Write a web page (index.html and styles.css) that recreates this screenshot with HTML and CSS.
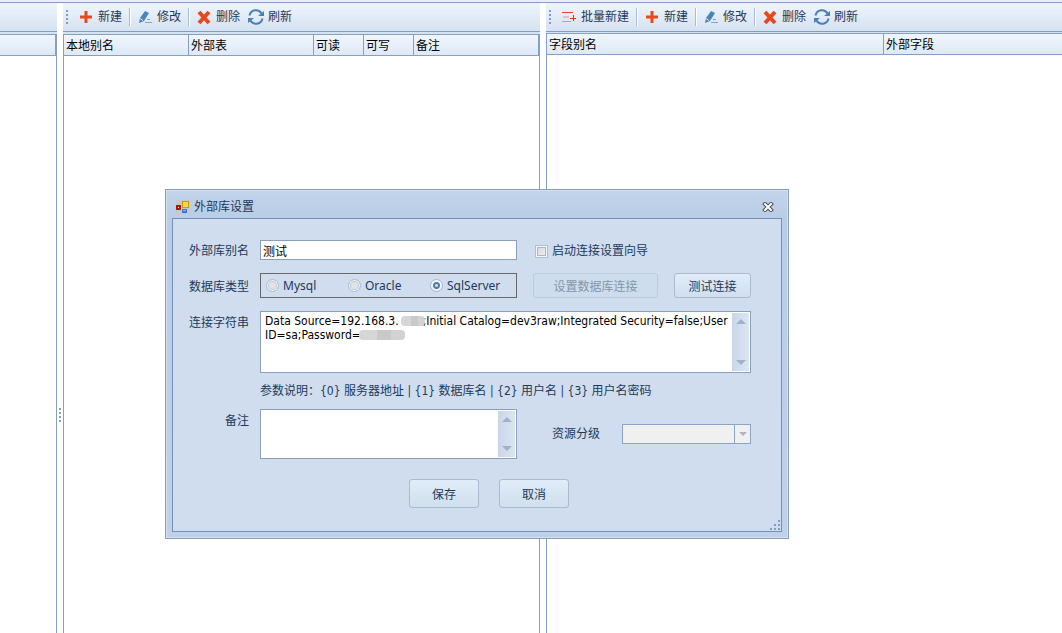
FILE: index.html
```html
<!DOCTYPE html>
<html lang="zh">
<head>
    <meta charset="UTF-8">
    <meta name="viewport" content="width=device-width, initial-scale=1.0">
    <title>外部库设置</title>
    <link rel="stylesheet" href="styles.css">
</head>
<body>
    <!-- 公用图标 -->
    <svg class="sprite" aria-hidden="true">
        <symbol id="i-add" viewBox="0 0 16 16">
            <path d="M8 2v12M2 8h12" stroke="#e8481c" stroke-width="3"/>
        </symbol>
        <symbol id="i-edit" viewBox="0 0 16 16">
            <path d="M8 2l4 2-5 8-5 2 1-5z" fill="#4a86bd"/>
            <path d="M3 9.500l3 2" stroke="#dfeaf6"/>
            <path d="M10 10.500h3M8 13.500h7" stroke="#7fa6cf"/>
        </symbol>
        <symbol id="i-del" viewBox="0 0 16 16">
            <path d="M3 3l10 11M13 3L3 14" stroke="#e8481c" stroke-width="4"/>
        </symbol>
        <symbol id="i-refresh" viewBox="0 0 16 16">
            <path d="M1.500 6.500a6.500 6.500 0 0 1 12-2M14.500 9.500a6.500 6.500 0 0 1-12 2" fill="none" stroke="#4a80b5" stroke-width="2"/>
            <path d="M16 2v5h-6zM0 14v-5h6z" fill="#4a80b5"/>
        </symbol>
        <symbol id="i-batch" viewBox="0 0 16 16">
            <path d="M1 3.500h11" stroke="#e0463a"/>
            <path d="M2 8h6M1 12.500h9" stroke="#ec8f87"/>
            <path d="M12.500 6v6M9 9.500h6" stroke="#e0301c"/>
        </symbol>
        <symbol id="i-up" viewBox="0 0 10 5">
            <path d="M0 5l5-5 5 5z" fill="#a0b2c9"/>
        </symbol>
        <symbol id="i-down" viewBox="0 0 10 5">
            <path d="M0 0l5 5 5-5z" fill="#a0b2c9"/>
        </symbol>
    </svg>

    <main class="workspace">
        <section class="pane pane-left">
            <div class="toolbar"></div>
            <div class="list">
                <table><thead><tr><th></th></tr></thead></table>
            </div>
        </section>

        <div class="splitter"><span class="dots"></span></div>

        <section class="pane">
            <div class="toolbar">
                <span class="dots"></span>
                <button type="button"><svg><use href="#i-add"/></svg>新建</button>
                <i class="sep"></i>
                <button type="button"><svg><use href="#i-edit"/></svg>修改</button>
                <i class="sep"></i>
                <button type="button"><svg><use href="#i-del"/></svg>删除</button>
                <button type="button"><svg><use href="#i-refresh"/></svg>刷新</button>
            </div>
            <div class="list">
                <table>
                    <thead>
                        <tr>
                            <th class="w-name">本地别名</th>
                            <th class="w-name">外部表</th>
                            <th class="w-flag">可读</th>
                            <th class="w-flag">可写</th>
                            <th>备注</th>
                        </tr>
                    </thead>
                </table>
            </div>
        </section>

        <div class="splitter"></div>

        <section class="pane pane-right">
            <div class="toolbar">
                <span class="dots"></span>
                <button type="button"><svg><use href="#i-batch"/></svg>批量新建</button>
                <i class="sep"></i>
                <button type="button"><svg><use href="#i-add"/></svg>新建</button>
                <i class="sep"></i>
                <button type="button"><svg><use href="#i-edit"/></svg>修改</button>
                <i class="sep"></i>
                <button type="button"><svg><use href="#i-del"/></svg>删除</button>
                <button type="button"><svg><use href="#i-refresh"/></svg>刷新</button>
            </div>
            <div class="list">
                <table>
                    <thead>
                        <tr>
                            <th class="w-field">字段别名</th>
                            <th>外部字段</th>
                        </tr>
                    </thead>
                </table>
            </div>
        </section>
    </main>

    <div class="dialog" role="dialog" aria-labelledby="dialog-title">
        <header class="titlebar">
            <svg class="app-icon" viewBox="0 0 14 14">
                <path d="M0 0h14v14H0z" fill="#c8c8c8"/>
                <path d="M0 5h5v5H0z" fill="#a01c10"/>
                <path d="M2 7h1v1H2z" fill="#fff"/>
                <path d="M6 1h7v7H6z" fill="#d9960c"/>
                <path d="M7 2h5v5H7z" fill="#ffd84a"/>
                <path d="M6 9h5v4H6z" fill="#3a74dc"/>
                <path d="M7 10h3v1H7z" fill="#8fb6f5"/>
            </svg>
            <h1 id="dialog-title">外部库设置</h1>
            <button type="button" class="close" aria-label="关闭">
                <svg viewBox="0 0 12 10">
                    <path d="M3 2l6 6M9 2L3 8" stroke="#4a4f5a" stroke-width="4" stroke-linecap="square"/>
                    <path d="M3 2l6 6M9 2L3 8" stroke="#fff" stroke-width="2" stroke-linecap="square"/>
                </svg>
            </button>
        </header>

        <form class="dialog-body">
            <div class="row">
                <label class="caption" for="alias">外部库别名</label>
                <input class="text field" id="alias" type="text" value="测试">
                <div class="side">
                    <label class="check"><input type="checkbox">启动连接设置向导</label>
                </div>
            </div>

            <div class="row">
                <span class="caption" id="type-label">数据库类型</span>
                <div class="radios field" role="radiogroup" aria-labelledby="type-label">
                    <label><input type="radio" name="dbtype">Mysql</label>
                    <label><input type="radio" name="dbtype">Oracle</label>
                    <label><input type="radio" name="dbtype" checked>SqlServer</label>
                </div>
                <div class="side">
                    <button type="button" class="btn btn-wide" disabled>设置数据库连接</button>
                    <button type="button" class="btn btn-test">测试连接</button>
                </div>
            </div>

            <div class="row row-top row-conn">
                <label class="caption" for="conn">连接字符串</label>
                <div class="memo">
                    <textarea id="conn" spellcheck="false">Data Source=192.168.3.&nbsp;&nbsp;&nbsp;&nbsp;&nbsp;&nbsp;&nbsp;;Initial Catalog=dev3raw;Integrated Security=false;User ID=sa;Password=</textarea>
                    <span class="mask mask-ip"></span>
                    <span class="mask mask-pwd"></span>
                    <div class="scroll"><svg><use href="#i-up"/></svg><svg><use href="#i-down"/></svg></div>
                </div>
            </div>

            <p class="hint">参数说明：{0} 服务器地址 | {1} 数据库名 | {2} 用户名 | {3} 用户名密码</p>

            <div class="row row-top row-remark">
                <label class="caption" for="remark">备注</label>
                <div class="memo field">
                    <textarea id="remark"></textarea>
                    <div class="scroll"><svg><use href="#i-up"/></svg><svg><use href="#i-down"/></svg></div>
                </div>
                <div class="side side-level">
                    <label for="level">资源分级</label>
                    <div class="combo">
                        <select id="level" disabled><option></option></select>
                        <span class="drop"><svg viewBox="0 0 8 4"><path d="M0 0h8L4 4z" fill="#b3b5bd"/></svg></span>
                    </div>
                </div>
            </div>

            <div class="actions">
                <button type="button" class="btn">保存</button>
                <button type="button" class="btn">取消</button>
            </div>

            <svg class="resize" viewBox="0 0 10 10">
                <path d="M8 0h2v2H8zM4 4h2v2H4zM8 4h2v2H8zM0 8h2v2H0zM4 8h2v2H4zM8 8h2v2H8z" fill="#7f9cc3"/>
            </svg>
        </form>
    </div>
</body>
</html>
```

FILE: styles.css
```css
* {
    margin: 0;
    padding: 0;
    box-sizing: border-box;
}

body {
    background: #fff;
    color: #1e395b;
    font-family: "Noto Sans", "Noto Sans CJK SC", sans-serif;
    font-size: 12px;
    line-height: 16px;
}

button, input, select, textarea {
    font: inherit;
    color: inherit;
}

svg {
    display: block;
    flex: none;
}

.sprite {
    position: absolute;
    width: 0;
    height: 0;
}

/* 主界面 */
.workspace {
    display: grid;
    grid-template-columns: 57px 6px 477px 6px 1fr;
    min-height: 100vh;
    border-top: 2px solid #ebedf0;
}

.pane {
    display: flex;
    flex-direction: column;
    min-width: 0;
}

.toolbar {
    display: flex;
    align-items: center;
    height: 30px;
    padding-left: 3px;
    border-top: 1px solid #7f9dc6;
    border-bottom: 1px solid #7f9dc6;
    background: linear-gradient(#eef5fe, #d6e2f0);
}

.toolbar button {
    display: flex;
    align-items: center;
    gap: 4px;
    padding: 0 4px;
    border: none;
    background: none;
    white-space: nowrap;
}

.toolbar svg {
    width: 16px;
    height: 16px;
}

.dots {
    width: 2px;
    height: 14px;
    background: repeating-linear-gradient(#7f9cc3 0 2px, transparent 2px 4px);
}

.toolbar .dots {
    margin-right: 6px;
}

.sep {
    width: 2px;
    height: 18px;
    margin: 0 2px 0 3px;
    border-left: 1px solid #a9bdd8;
    border-right: 1px solid #fff;
}

.splitter {
    display: flex;
    justify-content: center;
    padding-top: 64vh;
    border-top: 1px solid #7f9dc6;
}

.list {
    flex: 1;
    margin-top: 2px;
    border: 0 solid #84a0c5;
    border-width: 0 1px;
    box-shadow: 0 -2px #d5e2f1;
}

.pane-left .list {
    border-left: none;
}

.pane-right .list {
    margin-top: 1px;
    border-right: none;
    box-shadow: 0 -1px #d5e2f1;
}

table {
    width: 100%;
    table-layout: fixed;
    border-collapse: separate;
    border-spacing: 0;
}

th {
    height: 22px;
    padding: 2px 2px 0;
    border: 1px solid #84a0c5;
    border-left: none;
    background: linear-gradient(#f0f6fe, #dee9f6);
    color: #000;
    font-weight: normal;
    text-align: left;
}

.pane-right th:last-child {
    border-right: none;
}

.w-name {
    width: 125px;
}

.w-flag {
    width: 50px;
}

.w-field {
    width: 337px;
}

/* 弹出窗口 */
.dialog {
    position: absolute;
    top: 189px;
    left: 165px;
    width: 624px;
    padding: 0 6px 6px;
    border: 1px solid #8c9cb2;
    background: linear-gradient(#c2d4eb, #b9cde6 28px, #bfd1e9);
    box-shadow: inset 0 0 0 1px #d3e0f1;
}

.titlebar {
    display: flex;
    align-items: center;
    height: 28px;
    padding: 6px 8px 0 4px;
}

.titlebar h1 {
    flex: 1;
    font-size: 12px;
    font-weight: normal;
    margin-left: 4px;
}

.app-icon {
    width: 14px;
    height: 14px;
}

.close {
    border: none;
    background: none;
}

.close svg {
    width: 12px;
    height: 10px;
}

.dialog-body {
    position: relative;
    padding: 21px 30px 23px 16px;
    border: 1px solid #7590b4;
    background: #cfddee;
}

.row {
    display: flex;
    align-items: center;
    margin-bottom: 13px;
}

.row-top {
    align-items: stretch;
}

.row-conn {
    height: 62px;
    margin-bottom: 0;
}

.row-remark {
    height: 50px;
    margin-bottom: 20px;
}

.caption {
    flex: none;
    width: 60px;
    margin-right: 11px;
    padding-top: 2px;
    text-align: right;
    white-space: nowrap;
}

.row-top .caption {
    padding-top: 4px;
}

.field {
    flex: none;
    width: 257px;
}

.side {
    flex: 1;
    display: flex;
    align-items: center;
    justify-content: space-between;
    margin-left: 16px;
}

.text {
    height: 20px;
    padding: 2px 2px 0;
    border: 1px solid #8ba0bc;
    background: #fff;
    color: #000;
}

.check {
    display: flex;
    align-items: center;
    gap: 4px;
    margin-left: 2px;
    padding-top: 2px;
}

.check input {
    appearance: none;
    width: 13px;
    height: 13px;
    border: 1px solid #a9bfdc;
    background: linear-gradient(135deg, #d0d3d8, #f3f4f5);
    box-shadow: inset 0 0 0 1px #f4f6f8, inset 0 0 0 2px #b0b6c0;
}

.radios {
    display: grid;
    grid-template-columns: 82px 82px 1fr;
    align-items: center;
    height: 25px;
    padding-left: 5px;
    border: 1px solid #66686c;
}

.radios label {
    display: flex;
    align-items: center;
    gap: 4px;
}

.radios input {
    appearance: none;
    width: 13px;
    height: 13px;
    border: 1px solid #a9bdd8;
    border-radius: 50%;
    background: #e2e3e5;
    box-shadow: inset 0 0 0 1px #f4f6f9, inset 0 0 0 2px #c3c8d0;
}

.radios input:checked {
    border-color: #a3b8d6;
    background: radial-gradient(circle, #c9d9ee 0 1px, #5577a6 2px 3px, #f0f4f9 4px);
    box-shadow: none;
}

.btn {
    width: 70px;
    height: 29px;
    padding-top: 2px;
    border: 1px solid #abbad0;
    border-radius: 3px;
    background: linear-gradient(#e1ecf9, #d0dfee);
}

.side .btn {
    height: 25px;
}

.side .btn-wide {
    width: 125px;
}

.side .btn-test {
    width: 77px;
}

.btn:disabled {
    border-color: #bccbdd;
    background: #cddded;
    color: #8595a9;
}

.memo {
    position: relative;
    display: flex;
    border: 1px solid #8ba0bc;
    background: #fff;
}

.row-conn .memo {
    flex: 1;
}

.memo textarea,
.hint {
    font-family: "DejaVu Sans Condensed", "Noto Sans CJK SC", sans-serif;
}

.memo textarea {
    flex: 1;
    min-width: 0;
    padding: 2px 0 0 4px;
    border: none;
    background: none;
    color: #000;
    line-height: 14px;
    resize: none;
    overflow: hidden;
}

/* 遮住敏感内容 */
.mask {
    position: absolute;
    height: 10px;
    border-radius: 4px;
    background: linear-gradient(90deg, #d6d6d6 40%, #c9c9c9 40% 70%, #d2d2d2 70%);
}

.mask-ip {
    top: 4px;
    left: 140px;
    width: 24px;
}

.mask-pwd {
    top: 18px;
    left: 98px;
    width: 46px;
}

.scroll {
    display: flex;
    flex-direction: column;
    justify-content: space-between;
    align-items: center;
    width: 17px;
    margin: 1px;
    padding: 6px 0;
    background: linear-gradient(90deg, #c8d6e8, #dbe6f3);
}

.scroll svg {
    width: 10px;
    height: 5px;
}

.hint {
    padding-left: 71px;
    line-height: 36px;
    white-space: nowrap;
}

.side-level {
    margin-left: 35px;
}

.combo {
    display: flex;
    width: 129px;
    height: 20px;
    border: 1px solid #8ba5ca;
    background: #f0f0f0;
}

.combo select {
    appearance: none;
    flex: 1;
    min-width: 0;
    border: none;
    background: none;
}

.drop {
    display: flex;
    align-items: center;
    justify-content: center;
    width: 16px;
    border-left: 1px solid #8ba5ca;
}

.drop svg {
    width: 8px;
    height: 4px;
}

.actions {
    display: flex;
    justify-content: center;
    gap: 20px;
    padding-left: 38px;
}

.resize {
    position: absolute;
    right: 1px;
    bottom: 1px;
    width: 10px;
    height: 10px;
}
```
